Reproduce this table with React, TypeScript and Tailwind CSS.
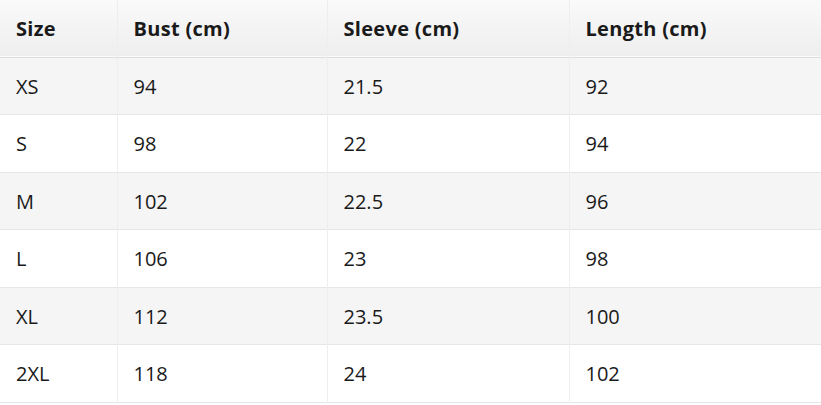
const headers = ["Size", "Bust (cm)", "Sleeve (cm)", "Length (cm)"];

const rows = [
  ["XS", "94", "21.5", "92"],
  ["S", "98", "22", "94"],
  ["M", "102", "22.5", "96"],
  ["L", "106", "23", "98"],
  ["XL", "112", "23.5", "100"],
  ["2XL", "118", "24", "102"],
];

export default function App() {
  return (
    <div className="w-[821px] bg-white text-[#1a1a1a] font-['Open_Sans','Noto_Sans',sans-serif]">
      <table className="w-full table-fixed border-collapse text-[20px]">
        <colgroup>
          <col className="w-[117px]" />
          <col className="w-[210px]" />
          <col className="w-[242px]" />
          <col />
        </colgroup>
        <thead>
          <tr className="bg-gradient-to-b from-[#fafafa] to-[#eeeeee] border-b border-[#dddddd]">
            {headers.map((h) => (
              <th
                key={h}
                className="px-4 pt-[17px] pb-[15px] leading-[24.5px] text-left font-bold tracking-[0.3px] border-x border-[#eeeeee] first:border-l-0 last:border-r-0"
              >
                {h}
              </th>
            ))}
          </tr>
        </thead>
        <tbody>
          {rows.map((r, i) => (
            <tr
              key={r[0]}
              className={`border-b border-[#e6e6e6] ${i % 2 === 0 ? "bg-[#f5f5f5]" : "bg-white"}`}
            >
              {r.map((c, j) => (
                <td
                  key={j}
                  className="px-4 pt-[17px] pb-[15px] leading-[24.5px] border-x border-[#eeeeee] first:border-l-0 last:border-r-0"
                >
                  {c}
                </td>
              ))}
            </tr>
          ))}
        </tbody>
      </table>
    </div>
  );
}
